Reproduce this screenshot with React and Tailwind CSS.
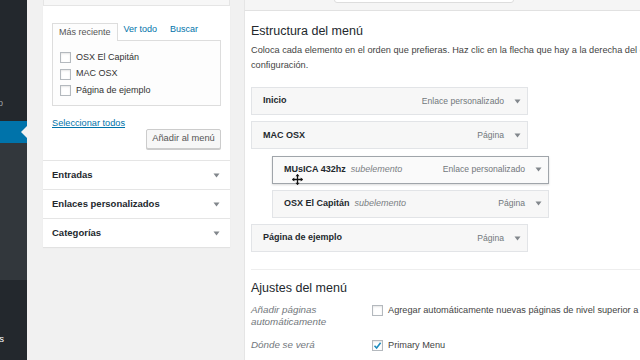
import React from "react"

const font = { fontFamily: '"Liberation Sans", Arial, sans-serif' }

const Caret = ({ className = "" }) => (
  <svg width="7" height="5" viewBox="0 0 7 5" className={className}>
    <path d="M0.5 0.5 L6.5 0.5 L3.5 4.5 Z" fill="#82878c" />
  </svg>
)

const Box = ({ checked }) => (
  <span className="w-[11px] h-[11px] border border-[#b4b9be] bg-white shadow-[inset_0_1px_2px_rgba(0,0,0,0.1)] flex items-center justify-center shrink-0">
    {checked && (
      <svg width="9" height="9" viewBox="0 0 9 9">
        <path d="M1.5 4.8 L3.6 7 L7.6 1.8" stroke="#1e8cbe" strokeWidth="1.6" fill="none" />
      </svg>
    )}
  </span>
)

const MenuItem = ({ title, sub, type, active }) => (
  <div
    className={`h-[28px] w-[277px] flex items-center pl-[11px] pr-[6px] border ${
      active ? "border-[#a0a5aa] bg-[#fafafa] shadow-[0_1px_2px_rgba(0,0,0,0.15)]" : "border-[#e2e4e7] bg-[#f7f7f7]"
    }`}
  >
    <span className="text-[9px] font-bold text-[#23282d]">{title}</span>
    {sub && <span className="ml-[5px] text-[9px] italic text-[#7a7f84]">subelemento</span>}
    <span className="ml-auto text-[8.6px] text-[#72777c]">{type}</span>
    <Caret className="ml-[10px]" />
  </div>
)

const Section = ({ label }) => (
  <div className="h-[29px] flex items-center justify-between px-[9px] border-t border-[#e5e5e5]">
    <span className="text-[9.5px] font-bold text-[#23282d]">{label}</span>
    <Caret className="mr-[1px]" />
  </div>
)

export default function App() {
  return (
    <div className="w-[640px] h-[360px] overflow-hidden bg-[#f1f1f1] flex" style={font}>
      {/* admin sidebar */}
      <div className="w-[27px] shrink-0 flex flex-col overflow-hidden">
        <div className="h-[121px] bg-[#23282d] flex flex-col justify-end pb-[11px]">
          <div className="flex justify-end w-[3px] whitespace-nowrap text-[9px] text-[#9ea3a8]">Apariencia info</div>
        </div>
        <div className="h-[22px] bg-[#0073aa] flex justify-end items-center">
          <div className="w-0 h-0 border-y-[6px] border-y-transparent border-r-[6px] border-r-[#f1f1f1]" />
        </div>
        <div className="h-[137px] bg-[#32373c]" />
        <div className="flex-1 bg-[#23282d] pt-[52px]">
          <div className="flex justify-end w-[4px] whitespace-nowrap text-[9.5px] text-white">Ajustes</div>
        </div>
      </div>

      {/* left column */}
      <div className="w-[187px] ml-[16px] shrink-0 flex flex-col">
        <div className="h-[6px] bg-[#f7f7f7] border-b border-[#e5e5e5] border-x" />
        <div className="bg-white shadow-[0_1px_1px_rgba(0,0,0,0.06)]">
          <div className="px-[9px] pt-[17px]">
            <div className="flex items-end h-[17px] text-[9px]">
              <div className="h-[18px] px-[6px] flex items-center border border-b-0 border-[#dddddd] bg-[#fdfdfd] text-[#555] relative top-[1px]">
                Más reciente
              </div>
              <span className="ml-[6px] mb-[4px] text-[#0073aa]">Ver todo</span>
              <span className="ml-[13px] mb-[4px] text-[#0073aa]">Buscar</span>
            </div>
            <div className="h-[66px] border border-[#dddddd] bg-[#fdfdfd] pl-[7px] pt-[11px] flex flex-col gap-[5.5px] text-[9px] text-[#333]">
              {["OSX El Capitán", "MAC OSX", "Página de ejemplo"].map((l) => (
                <div key={l} className="flex items-center gap-[5px] h-[11px]">
                  <Box />
                  <span>{l}</span>
                </div>
              ))}
            </div>
            <div className="mt-[11px] text-[9.2px] text-[#0073aa] underline leading-[13px]">Seleccionar todos</div>
            <div className="flex justify-end mt-[-1px]">
              <div className="h-[20px] w-[75px] flex items-center justify-center border border-[#cccccc] rounded-[2px] bg-[#f7f7f7] shadow-[0_1px_0_#ccc] text-[9.3px] text-[#555]">
                Añadir al menú
              </div>
            </div>
            <div className="h-[11px]" />
          </div>
          <Section label="Entradas" />
          <Section label="Enlaces personalizados" />
          <Section label="Categorías" />
        </div>
      </div>

      {/* right column */}
      <div className="flex-1 ml-[14px] flex flex-col">
        <div className="h-[11px] bg-[#f5f5f5] border-b border-[#e1e1e1] border-l border-l-[#e5e5e5] relative">
          <div className="absolute left-[89px] top-[-4px] w-[180px] h-[7px] bg-white border border-[#dddddd] rounded-[3px]" />
        </div>
        <div className="flex-1 bg-white border-l border-[#e5e5e5] pl-[6px]">
          <div className="text-[12.5px] text-[#23282d] mt-[12px] leading-[16px]">Estructura del menú</div>
          <div className="mt-[4px] text-[9.2px] leading-[15px] text-[#444] whitespace-nowrap">
            Coloca cada elemento en el orden que prefieras. Haz clic en la flecha que hay a la derecha del elemento para mostrar más opciones de
            <br />
            configuración.
          </div>
          <div className="mt-[14px] flex flex-col gap-[6.3px]">
            <MenuItem title="Inicio" type="Enlace personalizado" />
            <MenuItem title="MAC OSX" type="Página" />
            <div className="ml-[21px] relative">
              <MenuItem title="MUsICA 432hz" sub type="Enlace personalizado" active />
              <svg width="11" height="11" viewBox="0 0 11 11" className="absolute left-[20px] top-[18px]">
                <path d="M5.5 0.5 V10.5 M0.5 5.5 H10.5" stroke="#111" strokeWidth="1.3" />
                <path d="M5.5 0 L3.5 2.3 H7.5 Z M5.5 11 L3.5 8.7 H7.5 Z M0 5.5 L2.3 3.5 V7.5 Z M11 5.5 L8.7 3.5 V7.5 Z" fill="#111" />
              </svg>
            </div>
            <div className="ml-[21px]">
              <MenuItem title="OSX El Capitán" sub type="Página" />
            </div>
            <MenuItem title="Página de ejemplo" type="Página" />
          </div>
          <div className="mt-[17px] border-t border-[#eeeeee] mr-[-10px]" />
          <div className="text-[12.5px] text-[#23282d] mt-[10px] leading-[16px]">Ajustes del menú</div>
          <div className="mt-[8px] flex">
            <div className="w-[121px] italic text-[9.8px] text-[#72777c] leading-[12px]">
              Añadir páginas
              <br />
              automáticamente
            </div>
            <div className="flex items-start gap-[5px] pt-[1px]">
              <Box />
              <span className="text-[9.2px] text-[#444] whitespace-nowrap leading-[12px] -mt-[1px]">
                Agregar automáticamente nuevas páginas de nivel superior a este menú
              </span>
            </div>
          </div>
          <div className="mt-[10px] flex items-center">
            <div className="w-[121px] italic text-[9.8px] text-[#72777c]">Dónde se verá</div>
            <div className="flex items-center gap-[5px]">
              <Box checked />
              <span className="text-[9.2px] text-[#444]">Primary Menu</span>
            </div>
          </div>
        </div>
      </div>
    </div>
  )
}
